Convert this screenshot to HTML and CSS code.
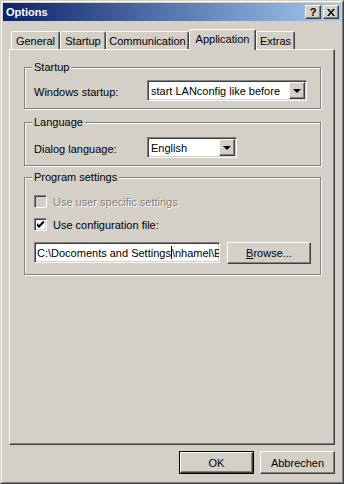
FILE: index.html
```html
<!DOCTYPE html>
<html lang="en">
<head>
  <meta charset="UTF-8">
  <title>Options</title>
  <link rel="stylesheet" href="styles.css">
</head>
<body>
  <div class="window">
    <div class="frame">
      <div class="titlebar">
        <span class="title">Options</span>
        <div class="tbtns">
          <div class="tbtn raised">?</div>
          <div class="tbtn raised">
            <svg width="8" height="7" viewBox="0 0 8 7"><path d="M0 0h2l2 2.5 2-2.5h2l-3 3.5 3 3.5h-2l-2-2.5-2 2.5h-2l3-3.5z" fill="#000"/></svg>
          </div>
        </div>
      </div>

      <div class="content">
        <div class="tabs">
          <div class="tab w-general">General</div>
          <div class="tab w-startup">Startup</div>
          <div class="tab w-comm">Communication</div>
          <div class="tab active w-app">Application</div>
          <div class="tab w-extras">Extras</div>
        </div>

        <div class="panel">
          <!-- Startup -->
          <div class="group g-startup">
            <span class="group-title">Startup</span>
            <div class="row r-startup">
              <span class="label">Windows startup:</span>
              <div class="combo sunken w-wide">
                <span class="combo-text">start LANconfig like before</span>
                <div class="drop raised"><span class="arrow"></span></div>
              </div>
            </div>
          </div>

          <!-- Language -->
          <div class="group g-lang">
            <span class="group-title">Language</span>
            <div class="row r-lang">
              <span class="label">Dialog language:</span>
              <div class="combo sunken w-short">
                <span class="combo-text">English</span>
                <div class="drop raised"><span class="arrow"></span></div>
              </div>
            </div>
          </div>

          <!-- Program settings -->
          <div class="group g-prog">
            <span class="group-title">Program settings</span>
            <div class="check first disabled">
              <span class="box sunken"></span>
              <span>Use user specific settings</span>
            </div>
            <div class="check">
              <span class="box sunken">
                <svg width="7" height="7" viewBox="0 0 7 7"><path d="M0 2v3l2 2 5-5v-3l-5 5z" fill="#000"/></svg>
              </span>
              <span>Use configuration file:</span>
            </div>
            <div class="file-row">
              <div class="field sunken">C:\Docoments and Settings<span class="caret"></span>\nhamel\E</div>
              <div class="btn raised browse"><span class="mnemonic">B</span><span>rowse...</span></div>
            </div>
          </div>
        </div>

        <div class="buttons">
          <div class="btn-default"><div class="btn raised"><span>OK</span></div></div>
          <div class="btn raised"><span>Abbrechen</span></div>
        </div>
      </div>
    </div>
  </div>
</body>
</html>
```

FILE: styles.css
```css
* {
  margin: 0;
  padding: 0;
  box-sizing: border-box;
}
body {
  font-family: "Liberation Sans", Arial, sans-serif;
  font-size: 11px;
  color: #000;
  background-color: #D4D0C8;
}

/* 3d edges */
.raised {
  border: 1px solid;
  border-color: #fff #404040 #404040 #fff;
  box-shadow: inset -1px -1px #808080;
  background-color: #D4D0C8;
}
.sunken {
  border: 1px solid;
  border-color: #808080 #fff #fff #808080;
  box-shadow: inset 1px 1px #404040, inset -1px -1px #D4D0C8;
  background-color: #fff;
}

.window {
  width: 344px;
  height: 484px;
  border: 1px solid;
  border-color: #D4D0C8 #404040 #404040 #D4D0C8;
}
.frame {
  height: 100%;
  border: 1px solid;
  border-color: #fff #808080 #808080 #fff;
  padding: 1px;
  display: flex;
  flex-direction: column;
}

/* title bar */
.titlebar {
  height: 18px;
  display: flex;
  align-items: center;
  justify-content: space-between;
  padding: 0 2px 0 3px;
  background: linear-gradient(to right, #0A246A, #A6CAF0);
}
.title {
  color: #fff;
  font-weight: bold;
  font-size: 11px;
}
.tbtns {
  display: flex;
  gap: 2px;
}
.tbtn {
  width: 16px;
  height: 14px;
  display: flex;
  align-items: center;
  justify-content: center;
  font-weight: bold;
  font-size: 11px;
  line-height: 12px;
}

.content {
  flex: 1;
  padding: 8px 6px 0 6px;
  display: flex;
  flex-direction: column;
}

/* tabs */
.tabs {
  display: flex;
  align-items: flex-end;
  height: 20px;
  padding-left: 2px;
  position: relative;
  z-index: 1;
}
.tab {
  height: 18px;
  padding-top: 3px;
  text-align: center;
  border-top: 1px solid #fff;
  border-left: 1px solid #fff;
  border-right: 1px solid #404040;
  border-radius: 2px 2px 0 0;
  box-shadow: inset -1px 0 #808080;
}
.tab.active {
  height: 21px;
  margin-bottom: -1px;
  padding-top: 3px;
  background-color: #D4D0C8;
}
.w-general { width: 49px; }
.w-startup { width: 46px; }
.w-comm { width: 83px; }
.w-app { width: 67px; }
.w-extras { width: 39px; }

.panel {
  width: 326px;
  height: 396px;
  border: 1px solid;
  border-color: #fff #404040 #404040 #fff;
  box-shadow: inset -1px -1px #808080;
  padding: 17px 0 0 14px;
}

/* group boxes */
.group {
  width: 297px;
  border: 1px solid #808080;
  box-shadow: inset 1px 1px #fff, 1px 1px #fff;
  padding-left: 9px;
}
.group-title {
  display: block;
  width: fit-content;
  line-height: 13px;
  margin: -7px 0 0 -2px;
  padding: 0 2px;
  background-color: #D4D0C8;
}
.g-startup { height: 42px; }
.g-lang { height: 44px; margin-top: 13px; }
.g-prog { height: 98px; margin-top: 11px; }

.row {
  display: flex;
  align-items: center;
}
.r-startup { margin-top: 6px; }
.r-lang { margin-top: 8px; }
.label {
  width: 113px;
  padding-top: 2px;
}

/* combo box */
.combo {
  height: 21px;
  display: flex;
  align-items: stretch;
  padding: 1px;
}
.w-wide { width: 160px; }
.w-short { width: 90px; }
.combo-text {
  flex: 1;
  padding: 3px 0 0 2px;
  white-space: nowrap;
  overflow: hidden;
}
.drop {
  width: 16px;
  display: flex;
  align-items: center;
  justify-content: center;
}
.arrow {
  width: 0;
  height: 0;
  border-left: 4px solid transparent;
  border-right: 4px solid transparent;
  border-top: 4px solid #000;
  margin-top: 1px;
}

/* checkboxes */
.check {
  display: flex;
  align-items: center;
  gap: 6px;
  margin-top: 8px;
  height: 15px;
}
.check.first {
  margin-top: 10px;
}
.box {
  width: 13px;
  height: 13px;
  display: flex;
  align-items: center;
  justify-content: center;
}
.check.disabled {
  color: #808080;
  text-shadow: 1px 1px #fff;
}
.check.disabled .box {
  background-color: #D4D0C8;
}

/* file path */
.file-row {
  display: flex;
  align-items: flex-start;
  gap: 7px;
  margin-top: 10px;
}
.field {
  width: 186px;
  height: 21px;
  padding: 3px 0 0 2px;
  white-space: nowrap;
  overflow: hidden;
}
.caret {
  display: inline-block;
  width: 1px;
  height: 13px;
  background-color: #000;
  vertical-align: -2px;
}

/* push buttons */
.btn {
  width: 75px;
  height: 23px;
  display: flex;
  align-items: center;
  justify-content: center;
}
.mnemonic {
  text-decoration: underline;
}
.browse {
  width: 84px;
  height: 22px;
}
.btn-default {
  border: 1px solid #000;
}
.btn-default .btn {
  width: 73px;
  height: 21px;
}

.buttons {
  display: flex;
  justify-content: flex-end;
  gap: 6px;
  margin-top: 6px;
}
```
